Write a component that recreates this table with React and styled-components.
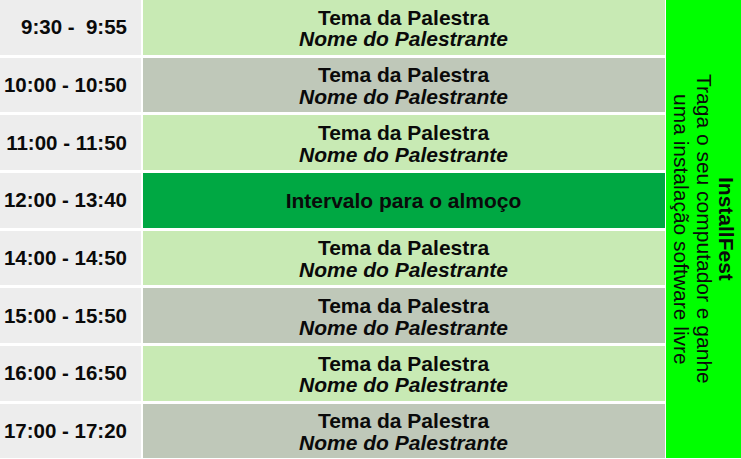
import styled, { createGlobalStyle } from 'styled-components';

const GlobalStyle = createGlobalStyle`
  html, body {
    margin: 0;
    padding: 0;
    background: #ffffff;
    overflow: hidden;
  }
`

const Schedule = styled.div`
  display: grid;
  grid-template-columns: 141px 522px 75px;
  grid-template-rows: repeat(8, 54.67px);
  column-gap: 1.5px;
  row-gap: 3px;
  width: 741px;
  font-family: "Liberation Sans", Arial, sans-serif;
  color: #0a0a0a;
`

const TimeCell = styled.div`
  background: #ededed;
  display: flex;
  align-items: center;
  justify-content: flex-end;
  padding-right: 14px;
  font-size: 20.5px;
  font-weight: bold;
  white-space: pre;
`

const TalkCell = styled.div`
  background: ${props => props.lunch ? '#00a843' : props.alt ? '#bfc8b9' : '#c8eab4'};
  display: flex;
  flex-direction: column;
  align-items: center;
  justify-content: center;
  padding-top: ${props => props.lunch ? '0' : '2px'};
  font-size: 21px;
  font-weight: bold;
  line-height: 21.5px;
`

const Speaker = styled.span`
  font-style: italic;
`

const InstallFest = styled.div`
  grid-column: 3;
  grid-row: 1 / span 8;
  background: #00ff00;
  writing-mode: vertical-rl;
  text-align: center;
  font-size: 21px;
  line-height: 22.5px;
  display: flex;
  align-items: center;
  justify-content: center;
`

const FestTitle = styled.div`
  font-weight: bold;
`

const slots = [
  { time: ' 9:30 -  9:55' },
  { time: '10:00 - 10:50', alt: true },
  { time: '11:00 - 11:50' },
  { time: '12:00 - 13:40', lunch: true },
  { time: '14:00 - 14:50' },
  { time: '15:00 - 15:50', alt: true },
  { time: '16:00 - 16:50' },
  { time: '17:00 - 17:20', alt: true },
]

function App() {
  return (
    <>
      <GlobalStyle />
      <Schedule>
        {slots.map((slot, i) => (
          <>
            <TimeCell key={'t' + i} style={{ gridRow: i + 1 }}>{slot.time}</TimeCell>
            <TalkCell key={'c' + i} style={{ gridRow: i + 1 }} alt={slot.alt} lunch={slot.lunch}>
              {slot.lunch ? (
                <span>Intervalo para o almoço</span>
              ) : (
                <>
                  <span>Tema da Palestra</span>
                  <Speaker>Nome do Palestrante</Speaker>
                </>
              )}
            </TalkCell>
          </>
        ))}
        <InstallFest>
          <div>
            <FestTitle>InstallFest</FestTitle>
            <div>Traga o seu computador e ganhe</div>
            <div>uma instalação software livre</div>
          </div>
        </InstallFest>
      </Schedule>
    </>
  );
}

export default App;
